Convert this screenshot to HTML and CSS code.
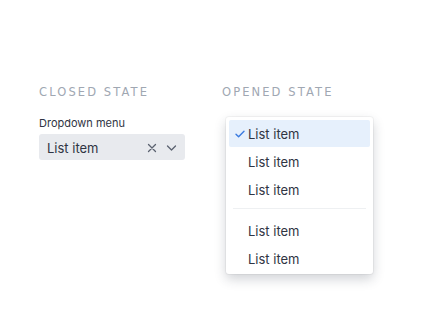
FILE: index.html
```html
<!DOCTYPE html>
<html lang="en">

<head>
    <meta charset="UTF-8">
    <meta name="viewport" content="width=device-width, initial-scale=1.0">
    <title>Dropdown states</title>
    <link rel="stylesheet" href="styles.css">
</head>

<body>
    <div class="page-container">
        <!-- Closed state -->
        <div class="state-column closed-column">
            <h2 class="state-title">Closed state</h2>
            <label class="field-label">Dropdown menu</label>
            <div class="select-box">
                <span class="select-value">List item</span>
                <span class="select-icons">
                    <svg width="10" height="10" viewBox="0 0 10 10"><path d="M1.5 1.5l7 7M8.5 1.5l-7 7" stroke="#5b6270" stroke-width="1.3" fill="none" stroke-linecap="round"/></svg>
                    <svg width="11" height="8" viewBox="0 0 11 8"><path d="M1.5 2l4 4 4-4" stroke="#5b6270" stroke-width="1.3" fill="none" stroke-linecap="round" stroke-linejoin="round"/></svg>
                </span>
            </div>
        </div>

        <!-- Opened state -->
        <div class="state-column opened-column">
            <h2 class="state-title">Opened state</h2>
            <div class="menu-panel">
                <div class="menu-item selected">
                    <svg class="check-icon" width="10" height="8" viewBox="0 0 10 8"><path d="M1 4.2l2.6 2.6L9 1.2" stroke="#3a7be0" stroke-width="1.4" fill="none" stroke-linecap="round" stroke-linejoin="round"/></svg>
                    List item
                </div>
                <div class="menu-item">List item</div>
                <div class="menu-item">List item</div>
                <div class="menu-separator"></div>
                <div class="menu-item">List item</div>
                <div class="menu-item">List item</div>
            </div>
        </div>
    </div>
</body>

</html>
```

FILE: styles.css
```css
:root {
    --title-color: #a0a7b2;
    --text-color: #2f3543;
    --field-bg: #e8eaee;
    --selected-bg: #e6f0fc;
    --border-color: #eef0f2;
}

* {
    box-sizing: border-box;
    margin: 0;
    padding: 0;
}

body {
    font-family: Inter, 'Liberation Sans', Arial, sans-serif;
    color: var(--text-color);
    background-color: #fff;
    width: 440px;
    height: 330px;
    overflow: hidden;
}

.page-container {
    display: flex;
    padding: 85px 0 0 39px;
    gap: 37px;
}

.state-column {
    width: 146px;
}

.state-title {
    font-family: 'DejaVu Sans', sans-serif;
    font-size: 11.5px;
    font-weight: normal;
    text-transform: uppercase;
    letter-spacing: 2.1px;
    color: var(--title-color);
    line-height: 14px;
    white-space: nowrap;
}

.field-label {
    display: block;
    margin-top: 17px;
    font-size: 11px;
    line-height: 14px;
    color: var(--text-color);
}

.select-box {
    margin-top: 4px;
    height: 26px;
    background-color: var(--field-bg);
    border-radius: 3px;
    display: flex;
    align-items: center;
    justify-content: space-between;
    padding: 1px 8px 0;
    font-size: 13px;
}

.select-icons {
    display: flex;
    align-items: center;
    gap: 9px;
}

.opened-column {
    width: 151px;
}

.menu-panel {
    margin-top: 18px;
    margin-left: 4px;
    width: 147px;
    background-color: #fff;
    border-radius: 3px;
    padding: 3px 3px 2px;
    box-shadow: 0 0 0 1px rgba(0, 0, 0, 0.04), 0 5px 12px rgba(40, 50, 70, 0.22);
}

.menu-item {
    height: 28px;
    display: flex;
    align-items: center;
    padding: 1px 0 0 19px;
    font-size: 13px;
    border-radius: 2px;
    position: relative;
}

.menu-item.selected {
    background-color: var(--selected-bg);
    height: 27px;
}

.check-icon {
    position: absolute;
    left: 6px;
    top: 10px;
}

.menu-separator {
    height: 1px;
    background-color: var(--border-color);
    margin: 5px 4px 7px;
}
```
